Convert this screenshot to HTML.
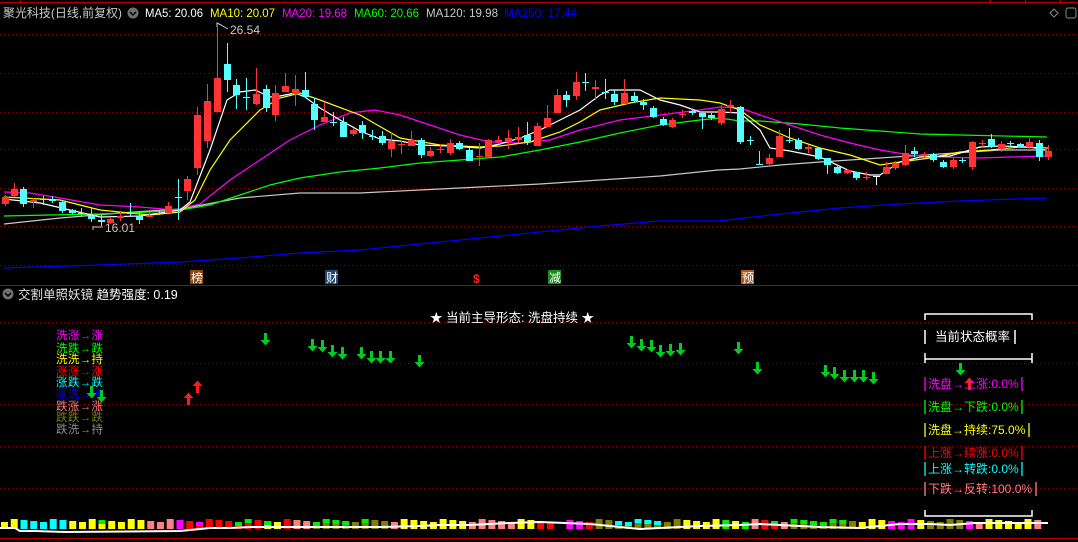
<!DOCTYPE html>
<html><head><meta charset="utf-8"><style>
html,body{margin:0;padding:0;background:#000;width:1078px;height:542px;overflow:hidden}
svg{display:block}
text{font-family:"Liberation Sans","Noto Sans CJK SC",sans-serif}
</style></head><body>
<svg id="s" width="1078" height="542" viewBox="0 0 1078 542" xmlns="http://www.w3.org/2000/svg">
<rect width="1078" height="542" fill="#000"/>
<line x1="0" y1="2.5" x2="1078" y2="2.5" stroke="#b00000" stroke-width="1"/>
<line x1="20.5" y1="0" x2="20.5" y2="3" stroke="#b00000"/>
<line x1="990.5" y1="0" x2="990.5" y2="3" stroke="#b00000"/>
<line x1="1025.5" y1="0" x2="1025.5" y2="3" stroke="#b00000"/>
<line x1="1060.5" y1="0" x2="1060.5" y2="3" stroke="#b00000"/>
<g id="grid" stroke="#900000" stroke-dasharray="1,3" stroke-width="1"></g>
<line x1="0" y1="285.5" x2="1078" y2="285.5" stroke="#b00000"/>
<line x1="0" y1="538.5" x2="1078" y2="538.5" stroke="#b00000"/>
<text x="3" y="17" font-size="12" fill="#c8c8c8" textLength="119" lengthAdjust="spacingAndGlyphs">聚光科技(日线,前复权)</text>
<circle cx="133" cy="13" r="5.5" fill="#707070"/>
<path d="M130 12 L133 15 L136 12" stroke="#000" stroke-width="1.5" fill="none"/>
<g font-size="12">
<text x="145" y="17" fill="#fff" textLength="58" lengthAdjust="spacingAndGlyphs">MA5: 20.06</text>
<text x="210" y="17" fill="#ffff00" textLength="65" lengthAdjust="spacingAndGlyphs">MA10: 20.07</text>
<text x="282" y="17" fill="#ff00ff" textLength="65" lengthAdjust="spacingAndGlyphs">MA20: 19.68</text>
<text x="354" y="17" fill="#00ff00" textLength="65" lengthAdjust="spacingAndGlyphs">MA60: 20.66</text>
<text x="426" y="17" fill="#c8c8c8" textLength="72" lengthAdjust="spacingAndGlyphs">MA120: 19.98</text>
<text x="504" y="17" fill="#0000ff" textLength="73" lengthAdjust="spacingAndGlyphs">MA250: 17.44</text>
</g>
<path d="M1050 13 L1054 9 L1058 13 L1054 17Z" stroke="#888" fill="none"/>
<rect x="1066" y="8" width="10" height="10" rx="2" stroke="#888" fill="none"/>
<text x="230" y="34" font-size="12" fill="#c8c8c8">26.54</text>
<path d="M217 27 L217 23 L221 25 L228 29" stroke="#c8c8c8" fill="none"/>
<text x="105" y="232" font-size="12" fill="#c8c8c8">16.01</text>
<path d="M93 226 L93 230 M93 227 L103 227" stroke="#c8c8c8" fill="none"/>
<g id="ma" fill="none" stroke-width="1.2"></g>
<g id="cdl"></g>
<rect x="190" y="270" width="13" height="14" fill="#8b4513"/><text x="191" y="282" font-size="12" fill="#fff">榜</text>
<rect x="325" y="270" width="13" height="14" fill="#1a4a7a"/><text x="326" y="282" font-size="12" fill="#fff">财</text>
<text x="473" y="283" font-size="12" fill="#ff2020" font-weight="bold">$</text>
<rect x="548" y="270" width="13" height="14" fill="#1a8a1a"/><text x="549" y="282" font-size="12" fill="#fff">减</text>
<rect x="741" y="270" width="13" height="14" fill="#b05a20"/><text x="742" y="282" font-size="12" fill="#fff">预</text>
<circle cx="8" cy="294" r="5.5" fill="#707070"/>
<path d="M5 293 L8 296 L11 293" stroke="#000" stroke-width="1.5" fill="none"/>
<text x="18" y="299" font-size="12.5" fill="#e0e0e0">交割单照妖镜 <tspan fill="#fff">趋势强度: 0.19</tspan></text>
<g font-size="11.5">
<text x="56" y="339" fill="#ff00ff" textLength="47">洗涨→涨</text>
<text x="56" y="352" fill="#00ff00" textLength="47">洗跌→跌</text>
<text x="56" y="363" fill="#ffff00" textLength="47">洗洗→持</text>
<text x="56" y="375" fill="#ff0000" textLength="47">涨涨→涨</text>
<text x="56" y="386" fill="#00ffff" textLength="47">涨跌→跌</text>
<text x="56" y="398" fill="#0000ff" textLength="47">涨洗→持</text>
<text x="56" y="410" fill="#ff8080" textLength="47">跌涨→涨</text>
<text x="56" y="421" fill="#808000" textLength="47">跌跌→跌</text>
<text x="56" y="433" fill="#909090" textLength="47">跌洗→持</text>
</g>
<text x="512" y="322" font-size="12.5" fill="#fff" text-anchor="middle">★ 当前主导形态: 洗盘持续 ★</text>
<g id="arr"></g>
<g stroke="#fff" stroke-width="1.5" fill="none">
<path d="M925 320 V314 H1032 V320"/>
<path d="M925 353 V363 M925 359 H1032 M1032 353 V363"/>
<path d="M925 510 V516 H1032 V510"/>
<path d="M925 330 V344 M1015 330 V344"/>
</g>
<text x="935" y="341" font-size="12.5" fill="#fff">当前状态概率</text>
<g font-size="12">
<text x="928" y="388" fill="#ff00ff">洗盘→上涨:0.0%</text><path d="M925 377 V391 M1022 377 V391" stroke="#ff00ff" stroke-width="1.3"/>
<text x="928" y="411" fill="#00ff00">洗盘→下跌:0.0%</text><path d="M925 400 V414 M1022 400 V414" stroke="#00ff00" stroke-width="1.3"/>
<text x="928" y="434" fill="#ffff00">洗盘→持续:75.0%</text><path d="M925 423 V437 M1029 423 V437" stroke="#ffff00" stroke-width="1.3"/>
<text x="928" y="457" fill="#ff0000">上涨→续涨:0.0%</text><path d="M925 446 V460 M1022 446 V460" stroke="#ff0000" stroke-width="1.3"/>
<text x="928" y="473" fill="#00ffff">上涨→转跌:0.0%</text><path d="M925 462 V476 M1022 462 V476" stroke="#00ffff" stroke-width="1.3"/>
<text x="928" y="493" fill="#ff8080">下跌→反转:100.0%</text><path d="M925 482 V496 M1036 482 V496" stroke="#ff8080" stroke-width="1.3"/>
</g>
<g id="vol"></g>
<polyline id="vl" fill="none" stroke="#fff" stroke-width="2"/>
</svg>
<script>
var NS="http://www.w3.org/2000/svg";
function el(p,t,a){var e=document.createElementNS(NS,t);for(var k in a)e.setAttribute(k,a[k]);document.getElementById(p).appendChild(e);return e;}
[34,73,112,149,188,226,265,322,363,404,446,488].forEach(function(y){el("grid","line",{x1:0,y1:y+.5,x2:1078,y2:y+.5});});
function pl(c,pts){el("ma","polyline",{points:pts.map(function(p){return p.join(",")}).join(" "),stroke:c});}
pl("#0000ff",[[4,268],[100,265],[180,262],[240,258],[300,253],[360,250],[420,244],[480,238],[540,232],[600,226],[660,221],[718,221],[780,214],[840,208],[900,204],[960,201],[1047,198]]);
pl("#c8c8c8",[[4,224],[60,218],[120,213],[180,209],[240,198],[300,193],[360,193],[420,190],[480,187],[540,184],[600,180],[660,176],[718,170],[740,169],[780,165],[820,162],[880,158],[940,154],[1000,150],[1047,150]]);
pl("#00ff00",[[4,216],[50,215],[100,214],[150,212],[180,210],[210,205],[240,195],[270,185],[300,178],[340,172],[380,168],[420,163],[460,160],[500,157],[540,150],[580,142],[620,133],[660,125],[700,120],[720,118],[740,121],[760,121],[800,124],[840,128],[880,131],[920,134],[960,135],[1047,137]]);
pl("#ff00ff",[[4,192],[30,193],[60,198],[100,205],[140,207],[175,210],[200,204],[230,180],[260,160],[290,140],[320,125],[350,113],[375,110],[400,115],[430,125],[460,135],[490,142],[520,143],[550,140],[580,130],[620,120],[660,115],[700,110],[720,107],[740,108],[760,115],[790,125],[820,135],[850,143],[880,150],[910,155],[940,157],[980,158],[1010,157],[1048,156]]);
pl("#ffff00",[[4,197],[60,200],[100,210],[150,215],[180,212],[195,200],[210,170],[230,140],[260,110],[280,98],[300,93],[320,100],[360,115],[400,138],[440,145],[480,147],[500,146],[530,142],[560,132],[580,122],[600,110],[630,103],[660,98],[700,100],[720,103],[740,110],[760,125],[790,138],[820,148],[850,155],[880,165],[900,162],[930,158],[960,152],[990,150],[1020,147],[1048,148]]);
pl("#ffffff",[[4,199],[40,203],[70,210],[100,217],[140,216],[180,210],[190,202],[210,150],[227,100],[240,92],[255,90],[270,97],[280,96],[295,93],[305,97],[320,108],[340,120],[360,131],[380,139],[400,141],[420,145],[450,146],[480,148],[500,144],[520,138],[540,130],[560,120],[580,110],[600,95],[610,90],[640,90],[660,100],[680,105],[700,112],[720,112],[740,113],[760,130],[770,148],[790,151],[820,157],[850,171],[870,175],[880,175],[900,162],[920,157],[950,156],[980,147],[1000,146],[1030,147],[1045,150]]);
var C=[[5,197,204,195,206,'r'],[14,189,196,183,197,'r'],[23,189,204,187,207,'c'],[33,200,202,198,208,'r'],[43,199,200,196,205,'c'],[52,200,201,196,203,'x'],[62,202,211,200,213,'c'],[72,210,213,209,214,'c'],[81,213,214,208,217,'x'],[91,216,219,208,222,'c'],[101,220,222,215,226,'c'],[110,219,223,218,224,'r'],[120,216,218,211,221,'r'],[130,213,214,203,216,'c'],[139,216,220,212,224,'c'],[149,216,217,212,217,'r'],[159,213,214,211,215,'x'],[168,206,213,202,213,'r'],[178,197,198,179,220,'c'],[187,179,191,176,200,'r'],[197,115,168,107,175,'r'],[207,101,141,84,148,'r'],[217,78,112,27,112,'r'],[227,64,80,43,92,'c'],[236,85,95,79,109,'c'],[246,97,98,78,110,'c'],[256,94,104,68,105,'r'],[266,89,108,85,112,'c'],[275,93,115,85,121,'r'],[285,86,92,73,92,'r'],[295,89,94,75,106,'r'],[305,90,97,72,97,'c'],[314,104,120,98,130,'c'],[324,117,122,102,122,'r'],[333,122,123,112,126,'c'],[343,122,137,117,137,'c'],[353,130,134,128,136,'r'],[362,125,133,121,139,'c'],[372,136,137,130,140,'c'],[382,136,143,131,145,'c'],[391,141,149,133,157,'r'],[401,144,145,141,154,'r'],[411,140,146,131,146,'r'],[421,140,155,138,158,'c'],[430,151,156,147,157,'r'],[440,149,150,144,153,'r'],[450,143,153,139,155,'r'],[459,143,149,141,150,'c'],[469,150,161,148,161,'c'],[479,156,157,143,166,'r'],[488,140,157,139,158,'r'],[498,140,142,136,144,'r'],[508,138,142,130,149,'r'],[518,137,140,127,143,'r'],[527,135,142,122,145,'c'],[537,126,146,123,146,'r'],[547,118,127,105,127,'r'],[557,95,113,89,113,'r'],[566,95,100,91,107,'c'],[576,82,96,72,100,'r'],[585,82,83,73,91,'c'],[595,87,89,80,100,'r'],[605,92,93,79,99,'c'],[614,94,102,90,105,'c'],[624,93,104,79,104,'r'],[634,96,101,92,103,'c'],[643,102,105,99,110,'c'],[653,108,117,106,118,'c'],[663,119,125,117,126,'c'],[672,120,127,118,128,'r'],[682,114,115,110,118,'r'],[692,111,113,109,115,'c'],[702,113,117,112,129,'c'],[711,115,118,113,120,'c'],[721,109,123,105,125,'r'],[730,105,107,100,113,'r'],[740,107,142,106,144,'c'],[750,140,141,136,145,'c'],[759,164,165,151,165,'c'],[769,158,164,154,167,'r'],[779,136,157,130,157,'r'],[789,140,141,128,143,'c'],[798,140,149,138,150,'c'],[808,147,149,145,153,'r'],[818,148,159,147,160,'c'],[827,158,165,158,174,'c'],[837,167,173,165,174,'c'],[847,170,173,169,174,'r'],[856,172,178,172,180,'c'],[866,177,178,172,180,'r'],[876,176,177,176,185,'w'],[886,167,174,162,174,'r'],[895,163,168,161,170,'r'],[905,153,165,145,166,'r'],[914,151,154,147,157,'c'],[924,154,156,152,158,'r'],[933,154,160,153,162,'c'],[943,162,167,160,168,'c'],[953,160,167,158,169,'r'],[962,160,161,158,163,'c'],[972,142,167,141,170,'r'],[982,143,144,140,147,'r'],[991,139,147,134,148,'c'],[1001,144,149,141,152,'r'],[1010,143,144,141,147,'c'],[1020,144,147,143,148,'c'],[1029,142,147,138,150,'r'],[1039,143,157,140,161,'c'],[1048,151,157,145,160,'r']];
C.forEach(function(c){var col=c[5]=='r'?'#ff3333':(c[5]=='w'?'#fff':'#55ffff');
el("cdl","line",{x1:c[0]+.5,y1:c[3],x2:c[0]+.5,y2:c[4],stroke:col});
el("cdl","rect",{x:c[0]-3,y:c[1],width:7,height:Math.max(1,c[2]-c[1]),fill:col});});
function down(x,y,c){el("arr","path",{d:"M"+(x-1)+" "+(y-7)+"h3v7h3.5l-5 5.5l-5-5.5h3.5z",fill:c||"#00cc22"});}
function up(x,y){el("arr","path",{d:"M"+(x-1)+" "+(y+7)+"h3v-7h3.5l-5-5.5l-5 5.5h3.5z",fill:"#ff1a1a"});}
[[265,340],[312,346],[322,347],[332,352],[342,354],[361,354],[371,358],[380,358],[390,358],[419,362],[631,343],[641,346],[651,347],[660,352],[670,351],[680,350],[738,349],[757,369],[825,372],[834,374],[844,377],[854,377],[863,377],[873,379],[960,370],[91,393],[101,397]].forEach(function(a){down(a[0],a[1]);});
up(188,398);up(197,386);up(969,383);
var V="y y c c c c c y y y Gy y y y y p p p m r Mr r r r Gr Gr r Gy y r p p Go Go Go Go o Go o o p y y y y y y y p p p p p y y r r k m m r o o Co Co Co Co Co o o y y y y g y g p r Gr p Go Go Go Go Go Go o y y y m m m y o o o o m p y y y y y p".split(" ");
var sp=1043/V.length;
var cm={y:"#ffff00",c:"#00ffff",p:"#ff8080",m:"#ff00ff",r:"#ff0000",o:"#808000",g:"#00ee00",k:"#000"};
V.forEach(function(t,i){var x=1+i*sp;if(t=='k')return;var h=7+((i*7)%4);var y=529-h;
if(t.length==2){var top={G:"#00ee00",M:"#ff00ff",C:"#00ffff"}[t[0]];var b=cm[t[1]];
el("vol","rect",{x:x,y:y,width:7,height:h,fill:b});el("vol","rect",{x:x,y:y,width:7,height:4,fill:top});}
else el("vol","rect",{x:x,y:y,width:7,height:h,fill:cm[t]});});
var L=[[0,528],[15,528],[20,531],[35,531],[65,532],[180,531],[190,530],[210,528],[230,528],[250,527],[300,527],[380,527],[420,526],[440,525],[470,525],[510,523],[540,522],[590,524],[620,527],[640,529],[680,527],[700,526],[740,525],[760,524],[800,526],[820,527],[860,528],[880,526],[900,524],[930,524],[950,525],[975,523],[1000,523],[1040,523],[1048,523]];
document.getElementById("vl").setAttribute("points",L.map(function(p){return p.join(",")}).join(" "));
</script>
</body></html>
